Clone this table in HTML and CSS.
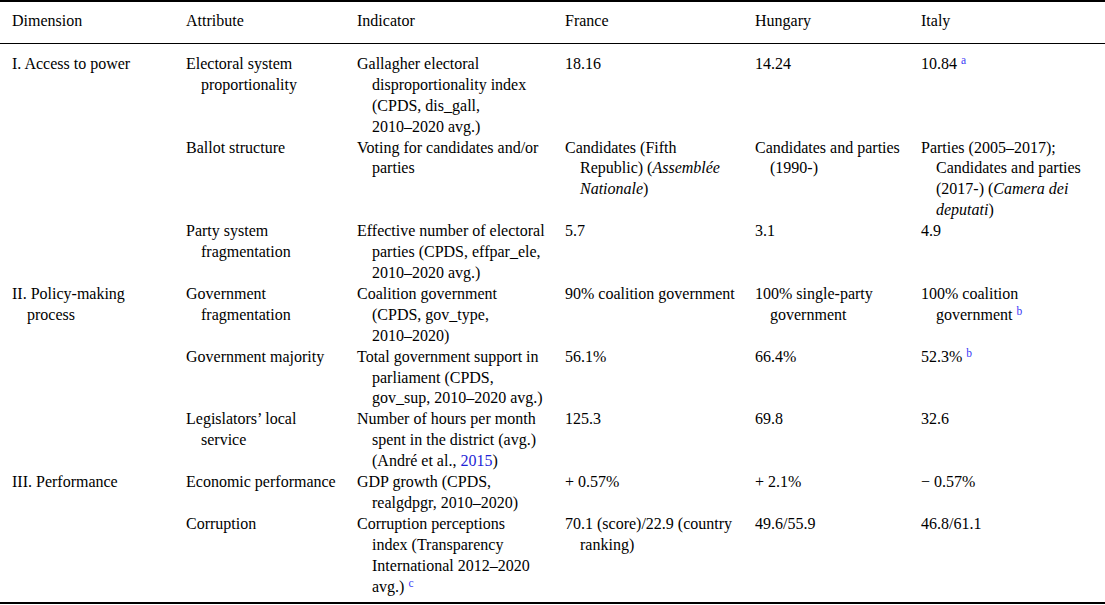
FILE: index.html
```html
<!DOCTYPE html>
<html lang="en">
<head>
<meta charset="utf-8">
<title>Table</title>
<link rel="stylesheet" href="styles.css">
</head>
<body>
<table class="data">
  <colgroup>
    <col class="c1"><col class="c2"><col class="c3"><col class="c4"><col class="c5"><col class="c6">
  </colgroup>
  <thead>
    <tr>
      <th>Dimension</th><th>Attribute</th><th>Indicator</th><th>France</th><th>Hungary</th><th>Italy</th>
    </tr>
  </thead>
  <tbody>
    <tr class="first">
      <td>I. Access to power</td>
      <td>Electoral system<br>proportionality</td>
      <td>Gallagher electoral<br>disproportionality index<br>(CPDS, dis_gall,<br>2010–2020 avg.)</td>
      <td>18.16</td>
      <td>14.24</td>
      <td>10.84 <sup class="fn">a</sup></td>
    </tr>
    <tr>
      <td></td>
      <td>Ballot structure</td>
      <td>Voting for candidates and/or<br>parties</td>
      <td>Candidates (Fifth<br>Republic) (<i>Assemblée<br>Nationale</i>)</td>
      <td>Candidates and parties<br>(1990-)</td>
      <td>Parties (2005–2017);<br>Candidates and parties<br>(2017-) (<i>Camera dei<br>deputati</i>)</td>
    </tr>
    <tr>
      <td></td>
      <td>Party system<br>fragmentation</td>
      <td>Effective number of electoral<br>parties (CPDS, effpar_ele,<br>2010–2020 avg.)</td>
      <td>5.7</td>
      <td>3.1</td>
      <td>4.9</td>
    </tr>
    <tr>
      <td>II. Policy-making<br>process</td>
      <td>Government<br>fragmentation</td>
      <td>Coalition government<br>(CPDS, gov_type,<br>2010–2020)</td>
      <td>90% coalition government</td>
      <td>100% single-party<br>government</td>
      <td>100% coalition<br>government <sup class="fn">b</sup></td>
    </tr>
    <tr>
      <td></td>
      <td>Government majority</td>
      <td>Total government support in<br>parliament (CPDS,<br>gov_sup, 2010–2020 avg.)</td>
      <td>56.1%</td>
      <td>66.4%</td>
      <td>52.3% <sup class="fn">b</sup></td>
    </tr>
    <tr>
      <td></td>
      <td>Legislators’ local<br>service</td>
      <td>Number of hours per month<br>spent in the district (avg.)<br>(André et al., <a class="ref" href="#">2015</a>)</td>
      <td>125.3</td>
      <td>69.8</td>
      <td>32.6</td>
    </tr>
    <tr>
      <td>III. Performance</td>
      <td>Economic performance</td>
      <td>GDP growth (CPDS,<br>realgdpgr, 2010–2020)</td>
      <td>+ 0.57%</td>
      <td>+ 2.1%</td>
      <td>− 0.57%</td>
    </tr>
    <tr class="last">
      <td></td>
      <td>Corruption</td>
      <td>Corruption perceptions<br>index (Transparency<br>International 2012–2020<br>avg.) <sup class="fn">c</sup></td>
      <td>70.1 (score)/22.9 (country<br>ranking)</td>
      <td>49.6/55.9</td>
      <td>46.8/61.1</td>
    </tr>
  </tbody>
</table>
</body>
</html>
```
FILE: styles.css
```css
html, body {
  margin: 0;
  padding: 0;
  background: #ffffff;
}

body {
  font-family: "Liberation Serif", "Times New Roman", serif;
  font-size: 16px;
  color: #000000;
}

.data {
  width: 1105px;
  border-collapse: collapse;
  table-layout: fixed;
  line-height: 20.9px;
}

.c1 { width: 186px; }
.c2 { width: 171px; }
.c3 { width: 208px; }
.c4 { width: 190px; }
.c5 { width: 166px; }
.c6 { width: 184px; }

.data th,
.data td {
  text-align: left;
  vertical-align: top;
  font-weight: normal;
  white-space: nowrap;
  padding: 0 0 0 15px;
  text-indent: -15px;
}

.data th:first-child,
.data td:first-child {
  padding-left: 27px;
}

.data thead th {
  border-top: 2px solid #000;
  border-bottom: 1px solid #000;
  padding-top: 9px;
  padding-bottom: 11px;
}

.data tr.first td {
  padding-top: 10px;
}

.data tr.last td {
  padding-bottom: 5px;
  border-bottom: 2px solid #000;
}

.fn {
  font-size: 11.5px;
  line-height: 0;
  vertical-align: 5px;
  color: #3a3af5;
}

.ref {
  color: #1f1fd6;
  text-decoration: none;
}
```
